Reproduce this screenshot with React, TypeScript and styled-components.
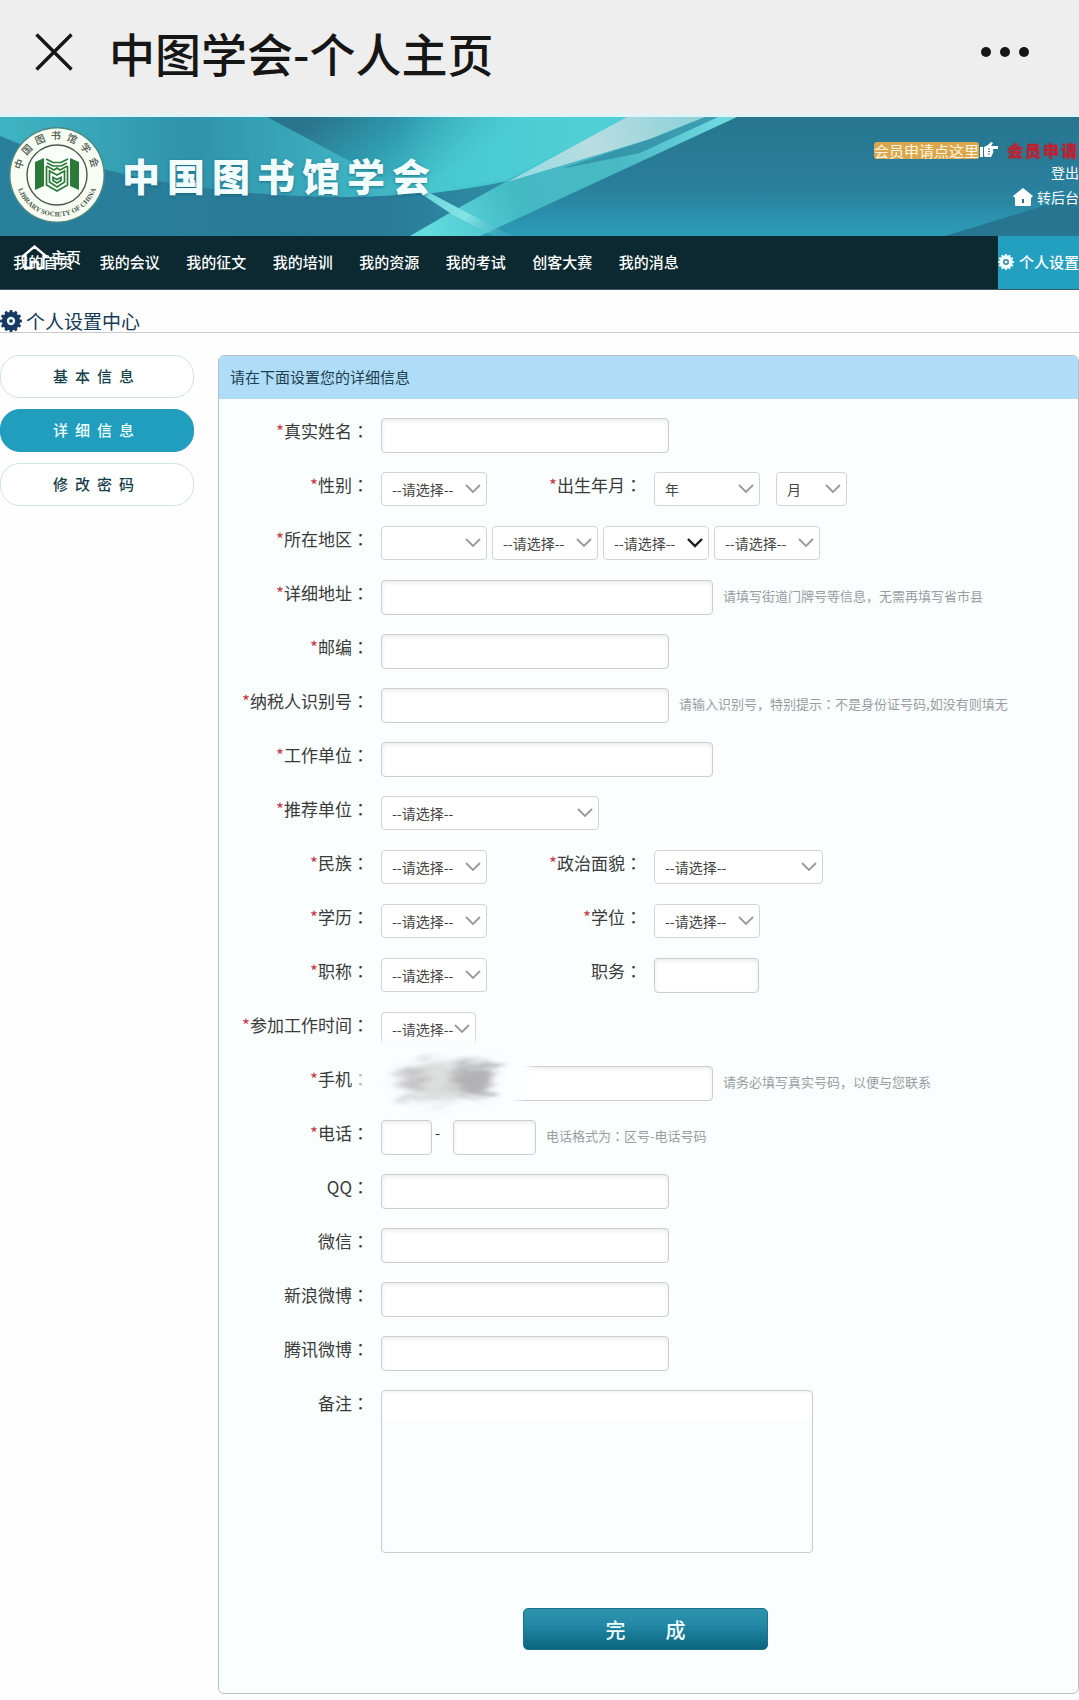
import React from "react";
import styled, { createGlobalStyle } from "styled-components";

const GlobalStyle = createGlobalStyle`
  * { box-sizing: border-box; }
  body {
    margin: 0;
    background: #fefefe;
    color: #333;
    font-family: "Noto Sans CJK SC", "Noto Sans", sans-serif;
    font-size: 15px;
    overflow-x: hidden;
  }
  button, input, select, textarea { font-family: inherit; }
  a { color: inherit; text-decoration: none; }
`;

/* ---------- browser bar ---------- */

const TopBar = styled.div`
  display: flex;
  align-items: center;
  height: 117px;
  padding: 0 48px 10px 34px;
  background: #eeeeee;
  border-bottom: 3px solid #dff3f9;
`;

const BarButton = styled.button`
  display: flex;
  padding: 0;
  border: 0;
  background: none;
`;

const PageTitle = styled.h1`
  flex: 1;
  margin: 0 0 0 35px;
  color: #161616;
  font-size: 46px;
  font-weight: 500;
  line-height: 60px;
  white-space: nowrap;
`;

/* ---------- banner ---------- */

const Banner = styled.header`
  position: relative;
  display: flex;
  justify-content: space-between;
  height: 119px;
  overflow: hidden;
  background: #287a96;
`;

const Backdrop = styled.svg`
  position: absolute;
  inset: 0;
  width: 100%;
  height: 100%;
`;

const Brand = styled.div`
  position: relative;
  display: flex;
  align-items: center;
  gap: 16px;
  padding: 0 0 4px 8px;
`;

const BrandName = styled.div`
  color: #f2fdff;
  font-size: 38px;
  font-weight: 900;
  letter-spacing: 7px;
  line-height: 56px;
  text-shadow: 0 1px 3px rgba(20, 90, 110, 0.7);
  white-space: nowrap;
`;

const UserLinks = styled.div`
  position: relative;
  display: flex;
  flex-direction: column;
  align-items: flex-end;
  padding-top: 22px;
  color: #fff;
  font-size: 14px;
  white-space: nowrap;
`;

const UserLine = styled.div<{ $height: number }>`
  display: flex;
  align-items: center;
  height: ${(p) => p.$height}px;
`;

const ApplyBadge = styled.a`
  height: 17px;
  border-radius: 3px;
  background: #dba650;
  color: #fff6dc;
  font-size: 15px;
  line-height: 17px;
`;

const ApplyLink = styled.a`
  margin-left: 8px;
  color: #c01f30;
  font-size: 16px;
  font-weight: 700;
  letter-spacing: 2px;
  text-shadow: 0 0 2px #b02238;
`;

const BackLink = styled.a`
  display: flex;
  align-items: center;
  gap: 4px;
`;

/* ---------- navigation ---------- */

const Nav = styled.nav`
  position: relative;
  display: flex;
  justify-content: space-between;
  height: 54px;
  background: #0c2931;
  border-bottom: 1px solid #3e5960;
  color: #fff;
  font-size: 15px;
  font-weight: 500;
  line-height: 52px;
  white-space: nowrap;
`;

const NavList = styled.ul`
  display: grid;
  grid-template-columns: repeat(8, 1fr);
  flex: 0 1 692px;
  margin: 0;
  padding: 0;
  list-style: none;
  text-align: center;
`;

const HomeOverlay = styled.a`
  position: absolute;
  left: 21px;
  top: 5px;
  display: flex;
  align-items: center;
  gap: 3px;
  line-height: 32px;
`;

const SettingsTab = styled.a`
  display: flex;
  align-items: center;
  gap: 5px;
  padding-bottom: 1px;
  background: #239fc0;
`;

/* ---------- page body ---------- */

const SectionTitle = styled.h2`
  display: flex;
  align-items: center;
  gap: 4px;
  height: 43px;
  margin: 0 0 22px;
  padding-top: 19px;
  border-bottom: 1px solid #cbcbcb;
  color: #153a55;
  font-size: 19px;
  font-weight: 400;
  line-height: 22px;
`;

const Content = styled.main`
  display: flex;
  gap: 24px;
  padding-bottom: 6px;
`;

const Sidebar = styled.nav`
  display: flex;
  flex: 0 0 194px;
  flex-direction: column;
  gap: 11px;
`;

const SideButton = styled.button<{ $active?: boolean }>`
  height: 43px;
  padding: 0 0 2px;
  border: 1px solid ${(p) => (p.$active ? "#239cbb" : "#cfe3e4")};
  border-radius: 20px;
  background: ${(p) => (p.$active ? "#219dbd" : "#fff")};
  color: ${(p) => (p.$active ? "#f0ffff" : "#173f4a")};
  font-size: 15px;
  font-weight: 500;
  letter-spacing: 7px;
`;

const Panel = styled.form`
  flex: 1;
  min-width: 0;
  border: 1px solid #b4c2cb;
  border-radius: 6px;
  background: #fafeff;
  overflow: hidden;
`;

const PanelHead = styled.div`
  height: 43px;
  padding-left: 11px;
  background: #afdcf7;
  color: #1d4050;
  font-size: 15px;
  line-height: 41px;
`;

const Rows = styled.div`
  padding-top: 19px;
`;

const Row = styled.div`
  position: relative;
  display: flex;
  align-items: flex-start;
  min-height: 54px;
  white-space: nowrap;
`;

const LabelCell = styled.label<{ $second?: boolean }>`
  flex: 0 0 ${(p) => (p.$second ? 155 : 150)}px;
  margin-right: 12px;
  color: #3a3a3a;
  font-size: 17px;
  line-height: 26px;
  text-align: right;
`;

const Star = styled.span`
  color: #c43a48;
`;

const Colon = styled.span`
  font-family: "Noto Sans CJK TC", sans-serif;
`;

const Group = styled.div<{ $gap: number }>`
  display: flex;
  gap: ${(p) => p.$gap}px;
`;

const TextBox = styled.input<{ $w: number }>`
  width: ${(p) => p.$w}px;
  height: 35px;
  padding: 0 10px;
  border: 1px solid #cdcdd0;
  border-radius: 4px;
  background: #fff;
  box-shadow: inset 0 2px 5px rgba(0, 0, 0, 0.08);
  font-size: 14px;
`;

const SelectWrap = styled.span<{ $w: number }>`
  position: relative;
  display: block;
  width: ${(p) => p.$w}px;
  height: 34px;
`;

const SelectBox = styled.select`
  appearance: none;
  width: 100%;
  height: 100%;
  padding: 0 0 0 10px;
  border: 1px solid #d3d3d6;
  border-radius: 4px;
  background: #fff;
  color: #444;
  font-size: 14px;
`;

const Chevron = styled.svg`
  position: absolute;
  right: 6px;
  top: 12px;
  pointer-events: none;
`;

const Hint = styled.span`
  margin-left: 10px;
  color: #999da0;
  font-size: 13px;
  line-height: 32px;
`;

const Dash = styled.span`
  width: 21px;
  padding-left: 3px;
  line-height: 26px;
`;

const Smudge = styled.svg`
  position: absolute;
  left: 130px;
  top: -34px;
  pointer-events: none;
`;

const Remarks = styled.textarea`
  display: block;
  width: 432px;
  height: 163px;
  border: 1px solid #cdcdd0;
  border-radius: 4px;
  background: linear-gradient(#fff 0 30px, #fafeff 30px);
  box-shadow: inset 0 1px 3px rgba(0, 0, 0, 0.06);
  font-size: 14px;
  resize: none;
`;

const Actions = styled.div`
  display: flex;
  justify-content: center;
  padding: 55px 6px 43px 0;
`;

const Submit = styled.button`
  width: 245px;
  height: 42px;
  border: 1px solid #1b7287;
  border-radius: 5px;
  background: linear-gradient(#2d93ae, #258aa8 35%, #0a667e);
  color: #effeff;
  font-size: 20px;
  font-weight: 500;
  white-space: pre;
`;

/* ---------- drawings ---------- */

function Gear({ size, color, hole, dot }: { size: number; color: string; hole: string; dot?: string }) {
  const teeth = Array.from({ length: 12 }, (_, i) => i * 30);
  return (
    <svg width={size} height={size} viewBox="-11 -11 22 22" aria-hidden="true">
      {teeth.map((a) => (
        <rect key={a} x="-1.500" y="-11" width="3" height="5" rx="1" fill={color} transform={`rotate(${a})`} />
      ))}
      <circle r="9.200" fill={color} />
      <circle r="4.200" fill={hole} />
      {dot && <circle r="1.800" fill={dot} />}
    </svg>
  );
}

function Emblem() {
  return (
    <svg width="98" height="98" viewBox="-49 -49 98 98" role="img" aria-label="中国图书馆学会">
      <defs>
        <path id="arcTop" d="M-33.300 12.100A35.500 35.500 0 1 1 33.300 12.100" />
        <path id="arcBottom" d="M-41.500 0A41.500 41.500 0 0 0 41.500 0" />
      </defs>
      <circle r="48" fill="#4d8a80" />
      <circle r="46.500" fill="#f7fdf3" />
      <circle r="30" fill="#fbfffa" stroke="#4b5a4d" strokeWidth="1.400" />
      <text fontFamily="Noto Sans CJK SC, sans-serif" fontSize="10" fontWeight="500" fill="#4b584b" textAnchor="middle" letterSpacing="5">
        <textPath href="#arcTop" startOffset="51%">中国图书馆学会</textPath>
      </text>
      <text fontFamily="Liberation Serif, serif" fontSize="7" fontWeight="700" fill="#4b584b" textAnchor="middle">
        <textPath href="#arcBottom" startOffset="50%">LIBRARY SOCIETY OF CHINA</textPath>
      </text>
      <g fill="#2c7a39">
        <path d="M-22 -13L-13 -17V11L-22 15ZM22 -13L13 -17V11L22 15Z" />
      </g>
      <g fill="none" stroke="#2c7a39" strokeWidth="1.700">
        <path d="M-11 -16L-4 -12.500H4L11 -16M-10 -12L-4 -9H4L10 -12" />
        <path d="M-10.500 -9L-3 -5L0 -7L3 -5L10.500 -9" />
        <path d="M-10.500 -9V10L0 16L10.500 10V-9" />
        <path d="M-7.500 -4V7L0 12L7.500 7V-4L0 0Z" />
        <path d="M-4 2.500V5.500L0 8L4 5.500V2.500L0 4.500Z" />
      </g>
    </svg>
  );
}

function BannerArt() {
  return (
    <Backdrop viewBox="0 0 1079 119" preserveAspectRatio="none" aria-hidden="true">
      <defs>
        <linearGradient id="deep" x1="0" y1="0" x2="0" y2="1">
          <stop offset="0" stopColor="#27768f" />
          <stop offset=".6" stopColor="#297f9c" />
          <stop offset="1" stopColor="#2c9db8" />
        </linearGradient>
        <linearGradient id="lagoon" x1="0" y1="0" x2="1" y2="0">
          <stop offset="0" stopColor="#3fb4c3" />
          <stop offset=".3" stopColor="#2f93ab" />
          <stop offset=".55" stopColor="#3eb2c1" />
          <stop offset="1" stopColor="#4ccbd3" />
        </linearGradient>
        <linearGradient id="corner" gradientUnits="userSpaceOnUse" x1="340" y1="-20" x2="420" y2="80">
          <stop offset="0" stopColor="#2a748d" />
          <stop offset=".5" stopColor="#2f9cb0" />
          <stop offset="1" stopColor="#45c6cf" />
        </linearGradient>
        <linearGradient id="glow" gradientUnits="userSpaceOnUse" x1="400" y1="0" x2="580" y2="0">
          <stop offset="0" stopColor="#50cfd6" stopOpacity="0" />
          <stop offset="1" stopColor="#50cfd6" />
        </linearGradient>
        <linearGradient id="ray" gradientUnits="userSpaceOnUse" x1="680" y1="0" x2="505" y2="64">
          <stop offset="0" stopColor="#93d3da" />
          <stop offset=".5" stopColor="#b9dde2" />
          <stop offset="1" stopColor="#8fdbe1" />
        </linearGradient>
        <linearGradient id="ribbon" gradientUnits="userSpaceOnUse" x1="720" y1="0" x2="430" y2="119">
          <stop offset="0" stopColor="#6fd9e0" />
          <stop offset=".35" stopColor="#49b9c5" />
          <stop offset=".7" stopColor="#43b9c4" />
          <stop offset="1" stopColor="#62dcdf" />
        </linearGradient>
        <linearGradient id="cross" gradientUnits="userSpaceOnUse" x1="430" y1="80" x2="500" y2="119">
          <stop offset="0" stopColor="#6fd8de" />
          <stop offset=".5" stopColor="#85e4e6" />
          <stop offset="1" stopColor="#4ab5c4" stopOpacity=".4" />
        </linearGradient>
        <linearGradient id="floor" gradientUnits="userSpaceOnUse" x1="0" y1="0" x2="500" y2="0">
          <stop offset="0" stopColor="#29809c" />
          <stop offset=".75" stopColor="#287a98" />
          <stop offset="1" stopColor="#2f8ca5" />
        </linearGradient>
      </defs>
      <rect width="1079" height="119" fill="url(#deep)" />
      <path d="M0 0H560L470 119H0Z" fill="url(#floor)" />
      <path d="M0 0H640L507 64C450 73 400 80 347 80C220 80 100 60 0 19Z" fill="url(#lagoon)" />
      <path d="M267 0H640L507 64C480 70 450 74 425 77L387 64Z" fill="url(#corner)" />
      <path d="M400 0H630L507 62L430 76L400 66Z" fill="url(#glow)" />
      <path d="M737 0H703L507 64L453 94L410 119H480Z" fill="url(#ribbon)" />
      <path d="M420 76L430 76L500 113L512 119H494L453 98Z" fill="url(#cross)" />
      <path d="M627 0H705L650 22L507 65Z" fill="url(#ray)" />
      <path d="M705 0H718L640 36L560 52L650 22Z" fill="#2f8ba1" opacity=".75" />
      <path d="M945 119L1079 78V119Z" fill="#267692" />
    </Backdrop>
  );
}

/* ---------- form parts ---------- */

const PICK = "--请选择--";

function Label({ id, text, optional, second }: { id: string; text: string; optional?: boolean; second?: boolean }) {
  return (
    <LabelCell htmlFor={id} $second={second}>
      {!optional && <Star>*</Star>}
      {text}
      <Colon>：</Colon>
    </LabelCell>
  );
}

function Select({ id, w = 106, text = PICK, dark, label }: { id: string; w?: number; text?: string; dark?: boolean; label?: string }) {
  return (
    <SelectWrap $w={w}>
      <SelectBox id={id} aria-label={label}>
        <option>{text}</option>
      </SelectBox>
      <Chevron width="16" height="10" viewBox="0 0 16 10" aria-hidden="true">
        <path d="M1 1L8 8L15 1" fill="none" stroke={dark ? "#1c1c1c" : "#999"} strokeWidth={dark ? 2.4 : 1.8} />
      </Chevron>
    </SelectWrap>
  );
}

function TextRow({ id, text, w = 288, optional, hint }: { id: string; text: string; w?: number; optional?: boolean; hint?: React.ReactNode }) {
  return (
    <Row>
      <Label id={id} text={text} optional={optional} />
      <TextBox id={id} $w={w} />
      {hint && <Hint>{hint}</Hint>}
    </Row>
  );
}

const NAV = ["我的首页", "我的会议", "我的征文", "我的培训", "我的资源", "我的考试", "创客大赛", "我的消息"];

export default function App() {
  return (
    <>
      <GlobalStyle />
      <TopBar>
        <BarButton aria-label="关闭">
          <svg width="40" height="40" viewBox="0 0 40 40">
            <path d="M2.500 2.500L37.500 37.500M37.500 2.500L2.500 37.500" stroke="#161616" strokeWidth="3.400" />
          </svg>
        </BarButton>
        <PageTitle>中图学会-个人主页</PageTitle>
        <BarButton aria-label="更多">
          <svg width="52" height="12" viewBox="0 0 52 12" fill="#161616">
            <circle cx="7" cy="6" r="5" />
            <circle cx="26" cy="6" r="5" />
            <circle cx="45" cy="6" r="5" />
          </svg>
        </BarButton>
      </TopBar>

      <Banner>
        <BannerArt />
        <Brand>
          <Emblem />
          <BrandName>中国图书馆学会</BrandName>
        </Brand>
        <UserLinks>
          <UserLine $height={22}>
            <ApplyBadge href="#apply">会员申请点这里</ApplyBadge>
            <svg width="20" height="16" viewBox="0 0 20 16" aria-hidden="true">
              <path d="M1 5H4V15H1ZM5 5L9 3L12 0L14 1L12 4H19V7H14V9H14.500L14 11L13 13L12 15H6L5 14Z" fill="#fff" />
              <path d="M9 7H11M9 9.500H11M9 12H11" stroke="#3a7f92" />
            </svg>
            <ApplyLink href="#apply">会员申请</ApplyLink>
          </UserLine>
          <UserLine $height={22}>
            <a href="#logout">登出</a>
          </UserLine>
          <UserLine $height={28}>
            <BackLink href="#admin">
              <svg width="20" height="18" viewBox="0 0 20 18" aria-hidden="true">
                <path d="M10 0L20 8L18 10V17Q18 18 17 18H3Q2 18 2 17V10L0 8Z" fill="#fff" />
                <path d="M9 11H11V15H9Z" fill="#3c6d7a" />
              </svg>
              转后台
            </BackLink>
          </UserLine>
        </UserLinks>
      </Banner>

      <Nav>
        <NavList>
          {NAV.map((n) => (
            <li key={n}>
              <a href="#nav">{n}</a>
            </li>
          ))}
        </NavList>
        <HomeOverlay href="#home">
          <svg width="27" height="26" viewBox="0 0 27 26" aria-hidden="true">
            <path d="M1 13L13.500 2.500L26 13M4.500 11V24H10.500V18H16.500V24H22.500V11" fill="none" stroke="#fff" strokeWidth="2.400" />
          </svg>
          主页
        </HomeOverlay>
        <SettingsTab href="#settings">
          <Gear size={16} color="#effcff" hole="#4b8fa3" dot="#effcff" />
          个人设置
        </SettingsTab>
      </Nav>

      <SectionTitle>
        <Gear size={22} color="#16395f" hole="#e6f3fa" dot="#16395f" />
        个人设置中心
      </SectionTitle>

      <Content>
        <Sidebar>
          <SideButton>基本信息</SideButton>
          <SideButton $active>详细信息</SideButton>
          <SideButton>修改密码</SideButton>
        </Sidebar>

        <Panel>
          <PanelHead>请在下面设置您的详细信息</PanelHead>
          <Rows>
            <TextRow id="name" text="真实姓名" />
            <Row>
              <Label id="sex" text="性别" />
              <Select id="sex" />
              <Label id="year" text="出生年月" second />
              <Group $gap={16}>
                <Select id="year" text="年" />
                <Select id="month" text="月" w={71} label="月" />
              </Group>
            </Row>
            <Row>
              <Label id="area" text="所在地区" />
              <Group $gap={5}>
                <Select id="area" text="" />
                <Select id="province" label="省" />
                <Select id="city" label="市" dark />
                <Select id="county" label="县" />
              </Group>
            </Row>
            <TextRow id="address" text="详细地址" w={332} hint="请填写街道门牌号等信息，无需再填写省市县" />
            <TextRow id="zip" text="邮编" />
            <TextRow
              id="tax"
              text="纳税人识别号"
              hint={
                <>
                  请输入识别号，特别提示<Colon>：</Colon>不是身份证号码,如没有则填无
                </>
              }
            />
            <TextRow id="company" text="工作单位" w={332} />
            <Row>
              <Label id="recommend" text="推荐单位" />
              <Select id="recommend" w={218} />
            </Row>
            <Row>
              <Label id="nation" text="民族" />
              <Select id="nation" />
              <Label id="politics" text="政治面貌" second />
              <Select id="politics" w={169} />
            </Row>
            <Row>
              <Label id="education" text="学历" />
              <Select id="education" />
              <Label id="degree" text="学位" second />
              <Select id="degree" />
            </Row>
            <Row>
              <Label id="rank" text="职称" />
              <Select id="rank" />
              <Label id="duty" text="职务" optional second />
              <TextBox id="duty" $w={105} />
            </Row>
            <Row>
              <Label id="since" text="参加工作时间" />
              <Select id="since" w={95} />
            </Row>
            <Row>
              <Label id="mobile" text="手机" />
              <TextBox id="mobile" $w={332} />
              <Hint>请务必填写真实号码，以便与您联系</Hint>
              <Smudge width="200" height="90" viewBox="0 0 200 90" aria-hidden="true">
                <defs>
                  <filter id="soft" x="-20%" y="-40%" width="140%" height="180%">
                    <feGaussianBlur stdDeviation="4" />
                  </filter>
                  <filter id="grain" x="-20%" y="-40%" width="140%" height="180%">
                    <feGaussianBlur in="SourceGraphic" stdDeviation="5" result="b" />
                    <feTurbulence type="fractalNoise" baseFrequency="0.03 0.14" numOctaves="4" seed="4" result="n" />
                    <feDisplacementMap in="b" in2="n" scale="22" xChannelSelector="R" yChannelSelector="G" />
                    <feGaussianBlur stdDeviation="0.800" />
                  </filter>
                </defs>
                <path d="M30 8H130L140 22H172L184 38L166 78L30 84L10 72V28Z" fill="#fbfdff" filter="url(#soft)" />
                <g filter="url(#grain)">
                  <path d="M46 36L80 30L150 30L146 48L138 66L90 70L54 68L44 52Z" fill="#dcdddd" />
                  <path d="M108 32L150 31L142 50L146 60L114 66L100 54Z" fill="#b2b2b4" />
                  <path d="M54 40L78 38L80 58L58 60Z" fill="#c6c6c8" />
                </g>
              </Smudge>
            </Row>
            <Row>
              <Label id="tel" text="电话" />
              <TextBox id="tel" $w={51} />
              <Dash>-</Dash>
              <TextBox aria-label="电话号码" $w={83} />
              <Hint>
                电话格式为<Colon>：</Colon>区号-电话号码
              </Hint>
            </Row>
            <TextRow id="qq" text="QQ" optional />
            <TextRow id="wechat" text="微信" optional />
            <TextRow id="sina" text="新浪微博" optional />
            <TextRow id="tencent" text="腾讯微博" optional />
            <Row>
              <Label id="remarks" text="备注" optional />
              <Remarks id="remarks" />
            </Row>
          </Rows>
          <Actions>
            <Submit type="button">{"完\u3000\u3000成"}</Submit>
          </Actions>
        </Panel>
      </Content>
    </>
  );
}
